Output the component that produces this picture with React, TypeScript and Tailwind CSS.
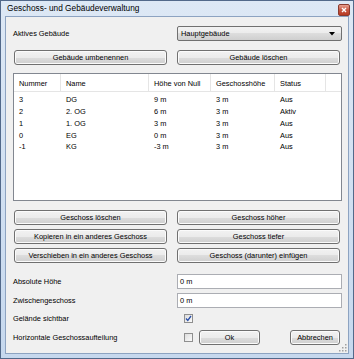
import React from 'react'

const font = { fontFamily: '"Liberation Sans", Arial, sans-serif' }

const btn =
  'flex h-[15px] items-center justify-center rounded-[3px] border border-[#707070] bg-[linear-gradient(to_bottom,#f2f2f2_0%,#ebebeb_50%,#dddddd_50%,#cfcfcf_100%)] shadow-[inset_0_0_0_1px_#fbfbfb] text-[7.4px] text-black leading-none'

function Button({ label, className = '' }: { label: string; className?: string }) {
  return <div className={`${btn} ${className}`}>{label}</div>
}

function Checkbox({ checked }: { checked?: boolean }) {
  return (
    <div className="flex h-[9px] w-[9px] items-center justify-center border border-[#8f8f8f] bg-[linear-gradient(135deg,#dcdcdc,#fbfbfb)]">
      {checked && (
        <svg width="7" height="7" viewBox="0 0 7 7">
          <path d="M1 3.5 L2.8 5.5 L6 1" fill="none" stroke="#2a4fa8" strokeWidth="1.3" />
        </svg>
      )}
    </div>
  )
}

const floors = [
  ['3', 'DG', '9 m', '3 m', 'Aus'],
  ['2', '2. OG', '6 m', '3 m', 'Aktiv'],
  ['1', '1. OG', '3 m', '3 m', 'Aus'],
  ['0', 'EG', '0 m', '3 m', 'Aus'],
  ['-1', 'KG', '-3 m', '3 m', 'Aus'],
]

const headers = ['Nummer', 'Name', 'Höhe von Null', 'Geschosshöhe', 'Status']
const cols = 'grid grid-cols-[47px_88px_62px_64px_51px]'

export default function App() {
  return (
    <div
      style={font}
      className="flex h-[359px] w-[354px] flex-col border border-[#52698a] bg-[linear-gradient(to_bottom,#dde8f5,#c6d8ee)] px-[4px] pb-[4px]"
    >
      {/* title bar */}
      <div className="flex h-[15px] items-center justify-between">
        <span className="pl-[2px] text-[8.3px] text-black">Geschoss- und Gebäudeverwaltung</span>
        <div className="mr-[-1px] mt-[2px] flex h-[12px] w-[12px] items-center justify-center rounded-[2px] border border-[#8a3a2e] bg-[linear-gradient(to_bottom,#e8a090,#c75843_50%,#b83a22)]">
          <svg width="6" height="6" viewBox="0 0 6 6">
            <path d="M1 1 L5 5 M5 1 L1 5" stroke="#fff" strokeWidth="1.4" />
          </svg>
        </div>
      </div>

      {/* client area */}
      <div className="relative flex flex-1 flex-col border border-[#8da3c1] bg-[#f0f0f0] pl-[7px] pr-[6px] text-[7.4px] text-black">
        <div className="mt-[9px] grid grid-cols-[154px_165px] gap-x-[10px]">
          <div className="flex items-center">Aktives Gebäude</div>
          <div className="flex h-[15px] items-center justify-between rounded-[2px] border border-[#707070] bg-[linear-gradient(to_bottom,#f2f2f2_0%,#ebebeb_50%,#dddddd_50%,#cfcfcf_100%)] pl-[3px] pr-[6px]">
            <span>Hauptgebäude</span>
            <svg width="6" height="4" viewBox="0 0 6 4">
              <path d="M0 0 L6 0 L3 3.5 Z" fill="#000" />
            </svg>
          </div>
        </div>

        <div className="mt-[9px] grid grid-cols-[154px_165px] gap-x-[10px]">
          <Button label="Gebäude umbenennen" className="ml-[1px]" />
          <Button label="Gebäude löschen" className="mr-[2px]" />
        </div>

        {/* list */}
        <div className="mt-[8px] h-[128px] border border-[#828790] bg-white">
          <div className={`${cols} h-[18px] border-b border-[#e5e5e5]`}>
            {headers.map((h) => (
              <div key={h} className="flex items-center border-r border-[#e5e5e5] pl-[5px] pt-[2px]">
                {h}
              </div>
            ))}
          </div>
          <div className="pt-[2px]">
            {floors.map((row) => (
              <div key={row[0]} className={`${cols} h-[11.75px]`}>
                {row.map((c, i) => (
                  <div key={i} className="flex items-center pl-[5px]">
                    {c}
                  </div>
                ))}
              </div>
            ))}
          </div>
        </div>

        <div className="mt-[9px] grid grid-cols-[154px_165px] gap-x-[10px] gap-y-[4px]">
          <Button label="Geschoss löschen" className="ml-[1px]" />
          <Button label="Geschoss höher" className="mr-[2px]" />
          <Button label="Kopieren in ein anderes Geschoss" className="ml-[1px]" />
          <Button label="Geschoss tiefer" className="mr-[2px]" />
          <Button label="Verschieben in ein anderes Geschoss" className="ml-[1px]" />
          <Button label="Geschoss (darunter) einfügen" className="mr-[2px]" />
        </div>

        <div className="mt-[11px] grid grid-cols-[154px_165px] gap-x-[10px] gap-y-[4px]">
          <div className="flex items-center">Absolute Höhe</div>
          <div className="flex h-[15px] items-center border border-[#abadb3] border-t-[#abadb3] bg-white pl-[2px]">0 m</div>
          <div className="flex items-center">Zwischengeschoss</div>
          <div className="flex h-[15px] items-center border border-[#abadb3] bg-white pl-[2px]">0 m</div>
        </div>

        <div className="mt-[4px] grid h-[13px] grid-cols-[154px_165px] gap-x-[10px]">
          <div className="flex items-center">Gelände sichtbar</div>
          <div className="flex items-center pl-[7px]">
            <Checkbox checked />
          </div>
        </div>

        <div className="mt-[5px] grid h-[15px] grid-cols-[154px_165px] gap-x-[10px]">
          <div className="flex items-center">Horizontale Geschossaufteilung</div>
          <div className="flex items-center pl-[7px]">
            <Checkbox />
            <Button
              label="Ok"
              className="ml-[6px] w-[61px] border-[#3c7fb1] shadow-[inset_0_0_0_1px_#8fd3f7]"
            />
            <Button label="Abbrechen" className="ml-[30px] w-[50px]" />
          </div>
        </div>

        {/* resize grip */}
        <svg className="absolute bottom-[1px] right-[1px]" width="10" height="10" viewBox="0 0 10 10">
          {[
            [8, 2],
            [8, 5],
            [5, 5],
            [8, 8],
            [5, 8],
            [2, 8],
          ].map(([x, y]) => (
            <rect key={`${x}-${y}`} x={x} y={y} width="1.5" height="1.5" fill="#a0a0a0" />
          ))}
        </svg>
      </div>
    </div>
  )
}
